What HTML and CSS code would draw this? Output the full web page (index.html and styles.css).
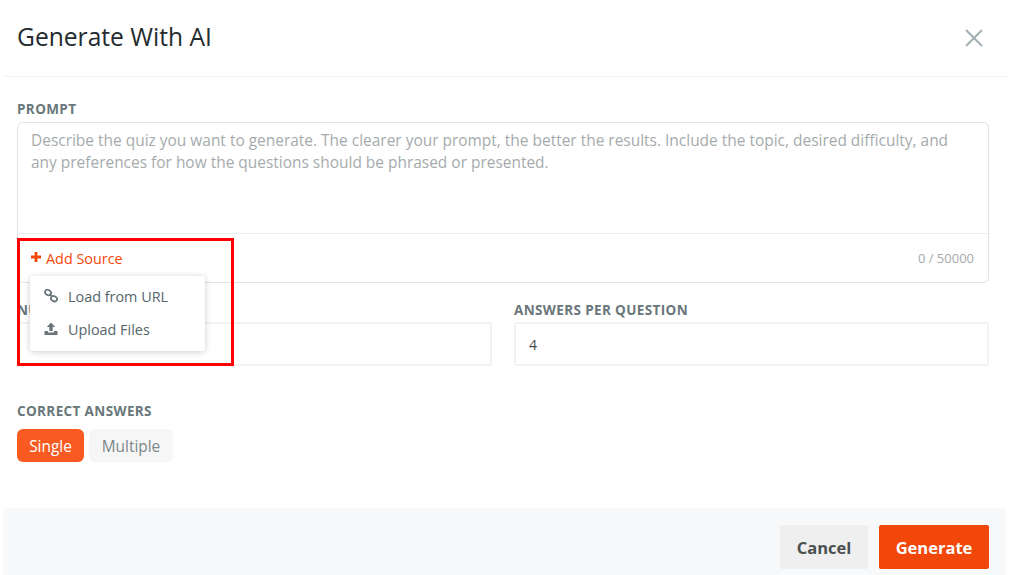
FILE: index.html
```html
<!DOCTYPE html>
<html lang="en">
<head>
    <meta charset="UTF-8">
    <meta name="viewport" content="width=device-width, initial-scale=1.0">
    <title>Generate With AI</title>
    <link rel="stylesheet" href="styles.css">
</head>
<body>
    <div class="modal">
        <header class="modal-header">
            <h2>Generate With AI</h2>
            <button class="close" aria-label="Close">
                <svg width="18" height="18" viewBox="0 0 18 18"><path d="M1 1L17 17M17 1L1 17" stroke="#a3b0b3" stroke-width="2" fill="none"/></svg>
            </button>
        </header>

        <div class="modal-body">
            <label class="field-label prompt-label">PROMPT</label>
            <div class="prompt-box">
                <div class="prompt-text">Describe the quiz you want to generate. The clearer your prompt, the better the results. Include the topic, desired difficulty, and any preferences for how the questions should be phrased or presented.</div>
                <div class="prompt-footer">
                    <div class="add-source">
                        <svg class="plus" width="10" height="10" viewBox="0 0 10 10"><path d="M5 0V10M0 5H10" stroke="#f4470b" stroke-width="2.8" fill="none"/></svg>
                        <span>Add Source</span>
                        <!-- Выпадающее меню -->
                        <div class="source-menu">
                            <div class="menu-item">
                                <svg width="14" height="14" viewBox="0 0 14 14"><g fill="none" stroke="#69777b" stroke-width="1.8"><rect x="0.9" y="1.1" width="6.2" height="4.8" rx="2.4" transform="rotate(30 4 3.5)"/><rect x="6.9" y="7.3" width="6.2" height="4.8" rx="2.4" transform="rotate(30 10 9.7)"/><path d="M5.5 5L8.5 8"/></g></svg>
                                <span>Load from URL</span>
                            </div>
                            <div class="menu-item">
                                <svg width="14" height="14" viewBox="0 0 14 14"><path fill="#69777b" d="M7 0.5L11.2 5H8.7V9H5.3V5H2.8ZM0.5 9H4V10.6H10V9H13.5V13H0.5Z"/></svg>
                                <span>Upload Files</span>
                            </div>
                        </div>
                    </div>
                    <div class="counter">0 / 50000</div>
                </div>
            </div>

            <div class="fields-row">
                <div>
                    <label class="field-label">NUMBER OF QUESTIONS</label>
                    <div class="input-box">5</div>
                </div>
                <div>
                    <label class="field-label">ANSWERS PER QUESTION</label>
                    <div class="input-box">4</div>
                </div>
            </div>

            <label class="field-label answers-label">CORRECT ANSWERS</label>
            <div class="toggle-group">
                <button class="toggle active">Single</button>
                <button class="toggle">Multiple</button>
            </div>
        </div>

        <footer class="modal-footer">
            <button class="btn btn-cancel">Cancel</button>
            <button class="btn btn-generate">Generate</button>
        </footer>
    </div>

    <!-- Красная рамка поверх скриншота -->
    <div class="highlight"></div>
</body>
</html>
```

FILE: styles.css
```css
html, body {
    height: 575px;
    overflow: hidden;
}
body {
    font-family: "Open Sans", Arial, sans-serif;
    margin: 0;
    padding: 0;
    background-color: #fff;
    color: #4a5558;
    position: relative;
}
button {
    font-family: inherit;
}
.modal {
    margin-left: 3px;
    width: 1003px;
    height: 575px;
    display: flex;
    flex-direction: column;
}
.modal-header {
    height: 76px;
    border-bottom: 1px solid #f2f3f4;
    padding: 0 17px 0 14px;
    display: flex;
    justify-content: space-between;
    align-items: center;
}
.modal-header h2 {
    margin: 0 0 4px;
    font-size: 24.6px;
    font-weight: 400;
    color: #232b2e;
}
.close {
    background: none;
    border: none;
    padding: 0;
    margin-right: 6px;
    height: 18px;
    cursor: pointer;
}
.modal-body {
    flex: 1;
    padding: 24px 17px 0 14px;
}
.field-label {
    display: block;
    font-size: 13.5px;
    line-height: 16px;
    font-weight: 700;
    letter-spacing: 0.37px;
    color: #69777b;
    margin-bottom: 4px;
}
.prompt-label {
    margin-bottom: 5px;
}
.prompt-box {
    height: 161px;
    box-sizing: border-box;
    border: 1px solid #e0e2e3;
    border-radius: 6px;
    display: flex;
    flex-direction: column;
}
.prompt-text {
    height: 110px;
    padding: 6px 13px;
    box-sizing: border-box;
    font-size: 15.46px;
    line-height: 22px;
    color: #a5abad;
}
.prompt-footer {
    flex: 1;
    border-top: 1px solid #eeeff0;
    padding: 0 14px 0 13px;
    display: flex;
    justify-content: space-between;
    align-items: center;
}
.add-source {
    position: relative;
    display: flex;
    align-items: center;
    gap: 5px;
    font-size: 14.4px;
    color: #f4470b;
    cursor: pointer;
}
.plus {
    margin-top: -3px;
}
.counter {
    font-size: 13px;
    color: #a5abad;
}
.source-menu {
    position: absolute;
    top: 27px;
    left: -1px;
    width: 175px;
    height: 75px;
    padding: 4px 0;
    box-sizing: border-box;
    background-color: #fff;
    border-radius: 3px;
    box-shadow: 0 1px 6px rgba(0, 0, 0, 0.2);
    z-index: 2;
}
.menu-item {
    height: 33px;
    padding-left: 14px;
    display: flex;
    align-items: center;
    gap: 10px;
    font-size: 14.4px;
    color: #55656a;
}
.fields-row {
    display: grid;
    grid-template-columns: 1fr 1fr;
    gap: 22px;
    margin-top: 19px;
}
.input-box {
    height: 44px;
    box-sizing: border-box;
    border: 2px solid #f1f2f3;
    border-radius: 2px;
    padding: 0 13px;
    display: flex;
    align-items: center;
    font-size: 14px;
    color: #3f494c;
}
.answers-label {
    margin-top: 37px;
    margin-bottom: 10px;
}
.toggle-group {
    display: flex;
    gap: 5px;
}
.toggle {
    height: 33px;
    border: none;
    border-radius: 6px;
    font-size: 15.4px;
    padding: 1px 0 0;
    width: 84px;
    background-color: #f6f6f6;
    color: #7b878a;
}
.toggle.active {
    width: 67px;
    background-color: #f85a22;
    color: #fff;
}
.modal-footer {
    height: 67px;
    box-sizing: border-box;
    background-color: #f8f9fb;
    padding: 17px 17px 6px 0;
    display: flex;
    justify-content: flex-end;
    gap: 11px;
}
.btn {
    height: 44px;
    border: none;
    border-radius: 2px;
    font-size: 16.5px;
    font-weight: 700;
}
.btn-cancel {
    width: 88px;
    background-color: #efefef;
    color: #4b4f50;
}
.btn-generate {
    width: 110px;
    background-color: #f1470b;
    color: #fff;
}
.highlight {
    position: absolute;
    left: 17px;
    top: 238px;
    width: 217px;
    height: 128px;
    box-sizing: border-box;
    border: 3px solid #ff0000;
    pointer-events: none;
    z-index: 3;
}
```
